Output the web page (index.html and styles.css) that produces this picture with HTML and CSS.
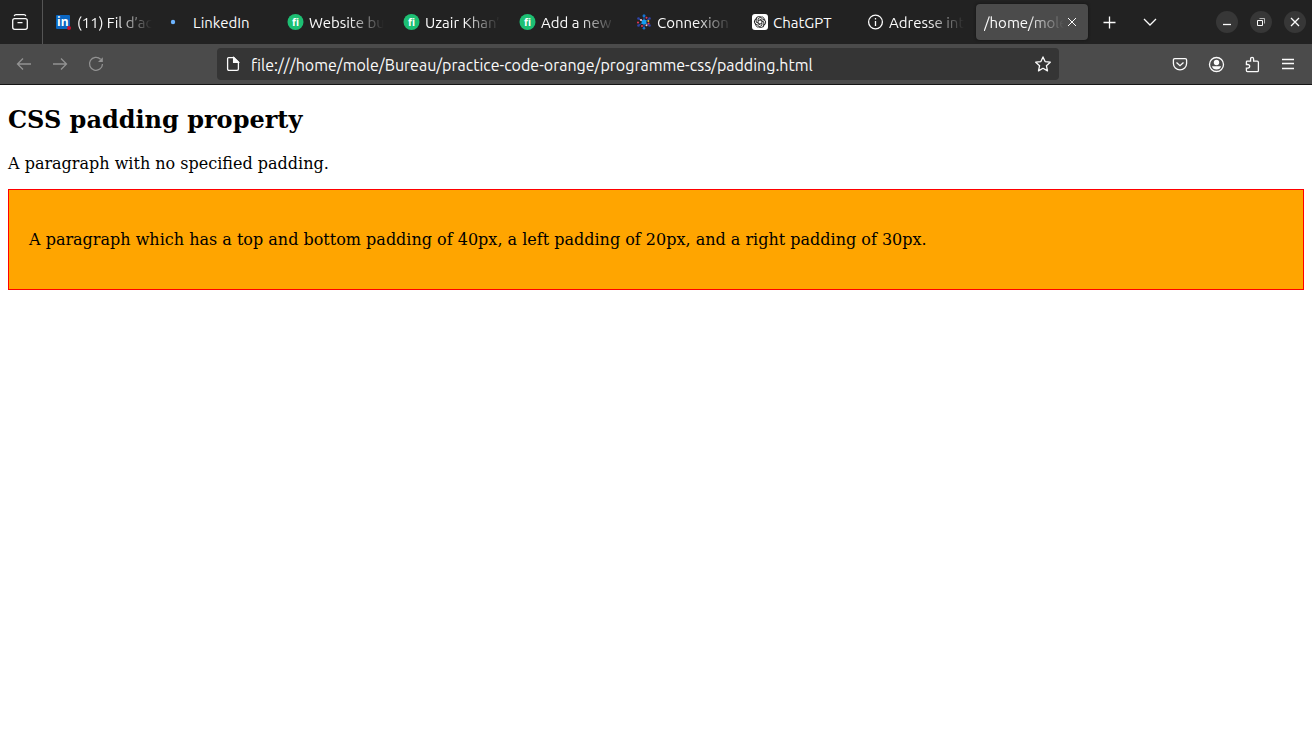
FILE: index.html
```html
<!DOCTYPE html>
<html lang="fr">
<head>
<meta charset="utf-8">
<title>CSS padding property</title>
<link rel="stylesheet" href="styles.css">
</head>
<body>
<header class="browser">
  <div class="tabbar">
    <button class="view" aria-label="Vue des onglets">
      <svg width="18" height="18" viewBox="0 0 18 18" class="line"><rect x="1.7" y="5.7" width="14.6" height="10.6" rx="2"/><path d="M3.2 3.2Q3.6 1.7 5 1.7h8q1.400 0 1.800 1.500M6.500 9.700h5"/></svg>
    </button>
    <nav class="tabs">
      <button class="tab"><svg width="16" height="16" viewBox="0 0 16 16"><rect width="14" height="14" y="1" rx="1" fill="#0a66c2"/><text x="1" y="12" class="logo-in">in</text><circle cx="13" cy="14" r="2" fill="#cb112d"/></svg><span class="label fade">(11) Fil d’ac</span></button>
      <button class="tab"><svg width="16" height="16" viewBox="0 0 16 16"><circle cx="1" cy="8" r="2.200" fill="#6eb5ff"/></svg><span class="label">LinkedIn</span></button>
      <button class="tab"><svg width="16" height="16" viewBox="0 0 16 16"><circle cx="7.500" cy="8" r="8" fill="#1dbf73"/><text x="7.500" y="12" class="logo-fi">fi</text></svg><span class="label fade">Website bu</span></button>
      <button class="tab"><svg width="16" height="16" viewBox="0 0 16 16"><circle cx="7.500" cy="8" r="8" fill="#1dbf73"/><text x="7.500" y="12" class="logo-fi">fi</text></svg><span class="label fade">Uzair Khan’</span></button>
      <button class="tab"><svg width="16" height="16" viewBox="0 0 16 16"><circle cx="7.500" cy="8" r="8" fill="#1dbf73"/><text x="7.500" y="12" class="logo-fi">fi</text></svg><span class="label fade">Add a new</span></button>
      <button class="tab"><svg width="16" height="16" viewBox="0 0 16 16"><g stroke="#2656b5" stroke-width="1"><path d="M8 8V2M8 8v6M8 8 3 5M8 8l5-3M8 8l-5 3M8 8l5 3"/></g><circle cx="8" cy="8" r="2.500" fill="#159ff0"/><g fill="#1673ce"><circle cx="8" cy="1.700" r="1.500"/><circle cx="8" cy="14.300" r="1.300"/></g><g fill="#3043a5"><circle cx="2.500" cy="4.500" r="1.300"/><circle cx="13.500" cy="4.500" r="1.300"/><circle cx="2.500" cy="11.500" r="1.300"/><circle cx="13.500" cy="11.500" r="1.300"/></g><g fill="#ef3553"><circle cx="10.500" cy="3.800" r="1"/><circle cx="2" cy="8.500" r="1"/><circle cx="6" cy="12" r="1"/><circle cx="12.600" cy="9.500" r="1"/></g><g fill="#f5c3d2"><circle cx="5" cy="6" r="1.100"/><circle cx="10.500" cy="11.300" r="1"/></g><circle cx="12.300" cy="7" r="1" fill="#e8bf36"/></svg><span class="label fade">Connexion</span></button>
      <button class="tab"><svg width="16" height="16" viewBox="0 0 16 16"><rect width="16" height="16" rx="3" fill="#fff"/><g fill="none" stroke="#222" stroke-width=".9"><g id="petal"><path d="M6.100 8.900V4.700L8.300 3.300Q10.600 2.100 12 4.200T12 6.500"/></g><use href="#petal" transform="rotate(60 8 8)"/><use href="#petal" transform="rotate(120 8 8)"/><use href="#petal" transform="rotate(180 8 8)"/><use href="#petal" transform="rotate(240 8 8)"/><use href="#petal" transform="rotate(300 8 8)"/></g></svg><span class="label">ChatGPT</span></button>
      <button class="tab"><svg width="16" height="16" viewBox="0 0 16 16" class="line"><circle cx="7.500" cy="8" r="6.900"/><path d="M7.500 7v5M7.500 4v1.500"/></svg><span class="label fade">Adresse int</span></button>
      <button class="tab active"><span class="label fade">/home/mole</span><svg width="16" height="16" viewBox="0 0 16 16" class="line thin"><path d="m4 4 8 8M12 4l-8 8"/></svg></button>
    </nav>
    <div class="actions">
      <button class="tool" aria-label="Nouvel onglet"><svg width="16" height="16" viewBox="0 0 16 16" class="line"><path d="M7.500 2.500v12M1.500 8.500h12"/></svg></button>
      <button class="tool" aria-label="Lister les onglets"><svg width="16" height="16" viewBox="0 0 16 16" class="line"><path d="m2 5 6 6 6-6"/></svg></button>
    </div>
    <div class="window">
      <button aria-label="Réduire"><svg width="16" height="16" viewBox="0 0 16 16" class="line"><path d="M4 10.500h8"/></svg></button>
      <button aria-label="Restaurer"><svg width="16" height="16" viewBox="0 0 16 16" class="line thin"><path d="M4.500 6.500h5v5h-5z"/><path d="M6.500 4.500h5v5" opacity=".65"/></svg></button>
      <button aria-label="Fermer"><svg width="16" height="16" viewBox="0 0 16 16" class="line"><path d="m4 4 8 8M12 4l-8 8"/></svg></button>
    </div>
  </div>
  <div class="toolbar">
    <button class="item dim" aria-label="Précédent"><svg width="16" height="16" viewBox="0 0 16 16" class="line"><path d="M15 8H1.500M7 2.500 1.500 8 7 13.500"/></svg></button>
    <button class="item dim" aria-label="Suivant"><svg width="16" height="16" viewBox="0 0 16 16" class="line"><path d="M1 8h13.500M9 2.500 14.500 8 9 13.500"/></svg></button>
    <button class="item dim" aria-label="Actualiser"><svg width="16" height="16" viewBox="0 0 16 16" class="line"><path d="M12.600 3.200A6.500 6.500 0 1 0 14.500 8"/><path d="M14.800 1.200V6H10z" fill="currentColor" stroke="none"/></svg></button>
    <div class="spring"></div>
    <div class="address">
      <svg width="16" height="16" viewBox="0 0 16 16" class="line"><path d="M3.600 1.600h5.400l4.400 4.400v7q0 1.400-1.400 1.400H4q-1.400 0-1.400-1.400V2.600q0-1 1-1z"/><path d="M8.600 1.600v4.800h4.800z" fill="currentColor"/></svg>
      <input type="text" aria-label="Adresse" value="file:///home/mole/Bureau/practice-code-orange/programme-css/padding.html">
      <button aria-label="Marquer cette page"><svg width="16" height="16" viewBox="0 0 16 16" class="line"><path d="m8 .9 2.100 4.700 5.200.6-3.900 3.500 1.100 5.200L8 12.300l-4.500 2.600 1.100-5.200L.7 6.200l5.200-.6z" stroke-linejoin="round"/></svg></button>
    </div>
    <div class="spring"></div>
    <button class="item" aria-label="Pocket"><svg width="16" height="16" viewBox="0 0 16 16" class="line"><path d="M2.800 2.600h10.400q1.400 0 1.400 1.400v3.600a6.600 6.200 0 0 1-13.200 0V4q0-1.400 1.400-1.400z"/><path d="m4.500 6.500 3.500 3.200 3.500-3.200"/></svg></button>
    <button class="item" aria-label="Compte"><svg width="16" height="16" viewBox="0 0 16 16" class="line"><circle cx="8.500" cy="8.500" r="7"/><g fill="currentColor" stroke="none"><circle cx="8.500" cy="6.500" r="2.700"/><path d="M4 10.300h9q-.8 3.200-4.500 3.200T4 10.300z"/></g></svg></button>
    <button class="item" aria-label="Extensions"><svg width="16" height="16" viewBox="0 0 16 16" class="line"><path d="M3.600 8.500H2.400V6q0-.8.800-.8h3.400V3q0-1.600 1.500-1.600T9.600 3v2.200h3.600q1.200 0 1.200 1.200v8q0 1.200-1.200 1.200H3.400q-1 0-1-1v-2.500h1.400q1.900 0 1.900-1.800T3.600 8.500z"/></svg></button>
    <button class="item" aria-label="Menu"><svg width="16" height="16" viewBox="0 0 16 16" class="line"><path d="M2 3.500h12M2 7.500h12M2 12.500h12"/></svg></button>
  </div>
</header>
<main class="page">
  <h2>CSS padding property</h2>
  <p>A paragraph with no specified padding.</p>
  <p class="padded">A paragraph which has a top and bottom padding of 40px, a left padding of 20px, and a right padding of 30px.</p>
</main>
</body>
</html>
```
FILE: styles.css
```css
* { box-sizing: border-box; }
body { margin: 0; background: #fff; color: #000; }
.browser { color: #fbfbfb; font: 15px/20px Ubuntu, "Noto Sans", sans-serif; border-bottom: 1px solid #151515; }
.browser button { padding: 0; border: 0; background: none; color: inherit; font: inherit; display: flex; align-items: center; justify-content: center; }
.browser svg { display: block; flex: none; overflow: visible; }
.line { fill: none; stroke: currentColor; stroke-width: 1.3; }
.thin { stroke-width: 1; }
.logo-in { font: bold 12px "Open Sans", sans-serif; fill: #fff; }
.logo-fi { font: bold 10px "Open Sans", sans-serif; fill: #fff; text-anchor: middle; font-variant-ligatures: none; }
.tabbar { display: flex; align-items: center; height: 44px; background: #222; }
.browser .view { width: 43px; height: 44px; padding-right: 2px; border-right: 1px solid #555; }
.tabs { display: flex; gap: 4px; margin-left: 5px; }
.browser .tab { width: 112px; height: 36px; padding: 0 8px; gap: 5px; border-radius: 4px; justify-content: flex-start; text-align: left; }
.browser .active { background: #4b4b4b; gap: 0; box-shadow: 0 0 3px #111; }
.label { flex: 1; min-width: 0; overflow: hidden; white-space: nowrap; line-height: 20px; padding-top: 1px; }
.fade { mask-image: linear-gradient(to right, #000 calc(100% - 36px), transparent); }
.actions { display: flex; margin-left: 2px; }
.browser .tool { width: 40px; height: 36px; }
.window { display: flex; gap: 12px; margin-left: auto; padding-right: 6px; }
.browser .window button { width: 22px; height: 22px; border-radius: 50%; background: #373737; }
.toolbar { display: flex; align-items: center; height: 40px; padding: 0 6px; background: #4b4b4b; }
.browser .item { width: 36px; height: 32px; }
.browser .dim { color: #929292; }
.spring { flex: 103 1 0; }
.address { flex: 826 1 0; display: flex; align-items: center; gap: 10px; height: 32px; padding: 0 8px; border-radius: 4px; background: #353535; }
.address input { flex: 1; min-width: 0; padding: 1px 0 0; border: 0; outline: 0; background: none; color: inherit; font: inherit; font-size: 16px; }
.page { padding: 20px 8px; font: 16px "DejaVu Serif", serif; }
.page h2 { margin: 0 0 20px; font-size: 24px; }
.page p { margin: 16px 0; }
.page .padded { padding: 40px 30px 40px 20px; border: 1px solid #f00; background: #ffa500; }
```
